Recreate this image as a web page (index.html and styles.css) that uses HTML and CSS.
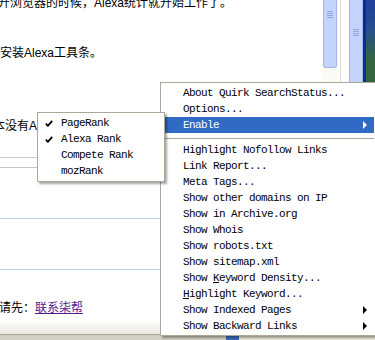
FILE: index.html
```html
<!DOCTYPE html>
<html lang="zh-CN">
<head>
    <meta charset="UTF-8">
    <meta name="viewport" content="width=device-width, initial-scale=1.0">
    <title>SearchStatus</title>
    <link rel="stylesheet" href="styles.css">
</head>
<body>
    <div class="window">
        <div class="main">
            <div class="page">
                <p class="line l1">开浏览器的时候，Alexa统计就开始工作了。</p>
                <p class="line l2">安装Alexa工具条。</p>
                <p class="line l3">本没有Alexa</p>
                <div class="rule r1"></div>
                <div class="rule r2"></div>
                <div class="rule blue r3"></div>
                <div class="rule blue r4"></div>
                <p class="line l4">请先：<a href="#">联系柒帮</a></p>
            </div>
            <div class="vscroll">
                <div class="thumb short"><span class="grip"></span></div>
            </div>
            <div class="split"></div>
            <div class="vscroll2">
                <div class="thumb tall"><span class="grip"></span></div>
            </div>
            <div class="desktop"></div>
        </div>
        <div class="fade"></div>
        <div class="statusbar">
            <span class="sb-blank"></span>
            <span class="sb-icon"></span>
            <span class="sb-text">PageRank: Alexa</span>
        </div>
    </div>

    <!-- SearchStatus context menu -->
    <div class="menu">
        <div class="item">About Quirk SearchStatus...</div>
        <div class="item">Options...</div>
        <div class="item active">Enable<span class="arrow"></span></div>
        <div class="sep"></div>
        <div class="item">Highlight Nofollow Links</div>
        <div class="item">Link Report...</div>
        <div class="item">Meta Tags...</div>
        <div class="item">Show other domains on IP</div>
        <div class="item">Show in Archive.org</div>
        <div class="item">Show Whois</div>
        <div class="item">Show robots.txt</div>
        <div class="item">Show sitemap.xml</div>
        <div class="item">Show <u>K</u>eyword Density...</div>
        <div class="item"><u>H</u>ighlight Keyword...</div>
        <div class="item">Show Indexed Pages<span class="arrow"></span></div>
        <div class="item">Show Backward Links<span class="arrow"></span></div>
    </div>

    <div class="submenu">
        <div class="item checked">
            <svg class="check" width="8" height="7" viewBox="0 0 8 7"><path d="M0.8 3.6 L2.9 5.8 L7.2 0.8" fill="none" stroke="#000" stroke-width="1.8"/></svg>PageRank
        </div>
        <div class="item checked">
            <svg class="check" width="8" height="7" viewBox="0 0 8 7"><path d="M0.8 3.6 L2.9 5.8 L7.2 0.8" fill="none" stroke="#000" stroke-width="1.8"/></svg>Alexa Rank
        </div>
        <div class="item">Compete Rank</div>
        <div class="item">mozRank</div>
    </div>
</body>
</html>
```

FILE: styles.css
```css
body {
    margin: 0;
    width: 375px;
    height: 340px;
    overflow: hidden;
    position: relative;
    background: #fff;
    font-family: "Liberation Sans", "Noto Sans CJK SC", sans-serif;
    font-size: 12px;
}

.window {
    display: flex;
    flex-direction: column;
    height: 340px;
}

.main {
    display: flex;
    height: 322px;
}

.page {
    width: 323px;
    overflow: hidden;
    background: #fff;
}

.line {
    margin: 0;
    line-height: 16px;
    white-space: nowrap;
    color: #000;
}

.l1 {
    margin-top: -5px;
    margin-left: -2px;
}

.l2 {
    margin-top: 34px;
}

.l3 {
    margin-top: 57px;
    margin-left: -7px;
}

.l4 {
    margin-top: 30px;
    margin-left: -1px;
}

.l4 a {
    color: #551a8b;
}

.rule {
    height: 1px;
    background: #c8c8c8;
}

.rule.blue {
    background: #c3d3e6;
}

.r1 { margin-top: 23px; }
.r2 { margin-top: 9px; }
.r3 { margin-top: 50px; }
.r4 { margin-top: 50px; }

/* scrollbars */
.vscroll {
    width: 15px;
    background: #fbfbf5;
}

.thumb {
    box-sizing: border-box;
    width: 14px;
    background: #c5d4fc;
    border: 1px solid #9fb6e6;
    border-top: none;
    border-radius: 0 0 3px 3px;
    display: flex;
    justify-content: center;
}

.thumb.short {
    height: 68px;
    padding-top: 11px;
}

.thumb.tall {
    height: 90px;
    padding-top: 29px;
}

.grip {
    width: 6px;
    height: 7px;
    background: repeating-linear-gradient(#8ea6de 0 1px, transparent 1px 2px);
}

.split {
    width: 11px;
    background: linear-gradient(to right, #fff 0 2px, #dedcd4 2px 3px, #fff 3px);
}

.vscroll2 {
    width: 14px;
    background: #fbfbf5;
}

.desktop {
    flex: 1;
    background:
        linear-gradient(to right, #0c2b94 0 3px, transparent 3px),
        linear-gradient(#1e3f9e 0, #27508e 30px, #35663f 60px, #2e5a2c);
}

.fade {
    height: 13px;
    background: linear-gradient(#fefefd, #e8e7df);
}

.statusbar {
    display: flex;
    height: 5px;
    border-top: 1px solid #a7a498;
    background: #ece9d8;
}

.sb-blank {
    width: 226px;
    background: #d2cfc3;
}

.sb-icon {
    width: 13px;
    background: #3d6cb6;
}

.sb-text {
    margin-left: 18px;
    font-size: 12px;
    line-height: 20px;
    color: #000;
}

/* context menus */
.menu,
.submenu {
    position: absolute;
    box-sizing: border-box;
    background: #fff;
    border: 1px solid #aca899;
    font-family: "Liberation Mono", monospace;
    font-size: 11px;
    letter-spacing: -0.6px;
    color: #000;
    box-shadow: 2px 2px 2px rgba(0, 0, 0, 0.35);
}

.menu {
    left: 160px;
    top: 82px;
    width: 217px;
    padding: 2px 0 1px;
}

.submenu {
    left: 37px;
    top: 112px;
    width: 128px;
    padding: 2px 0;
}

.item {
    position: relative;
    height: 16px;
    line-height: 17px;
    margin: 0 2px;
    padding-left: 20px;
    white-space: nowrap;
}

.submenu .item {
    padding-left: 21px;
}

.item.active {
    background: #316ac5;
    color: #fff;
}

.arrow {
    position: absolute;
    right: 7px;
    top: 4px;
    width: 0;
    height: 0;
    border-left: 4px solid #000;
    border-top: 4px solid transparent;
    border-bottom: 4px solid transparent;
}

.active .arrow {
    border-left-color: #fff;
}

.sep {
    height: 1px;
    margin: 5px 2px 3px;
    background: #aca899;
}

.check {
    position: absolute;
    left: 5px;
    top: 5px;
}
```
